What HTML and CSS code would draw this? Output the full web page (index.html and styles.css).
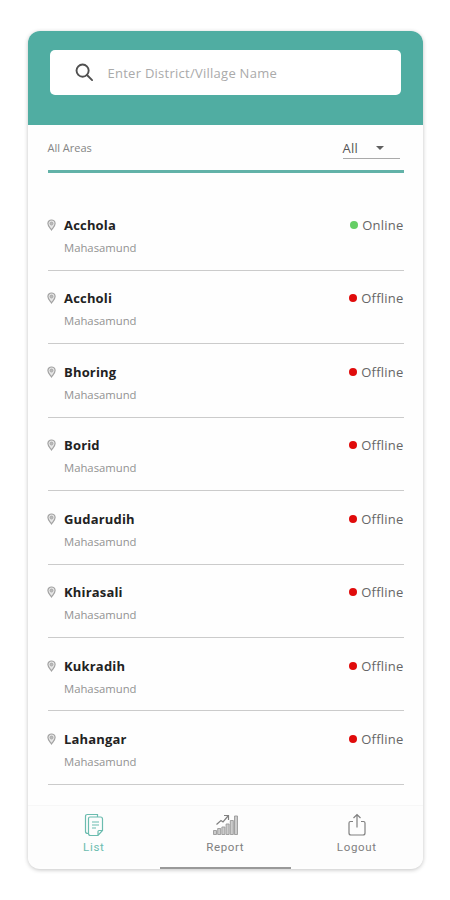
FILE: index.html
```html
<!DOCTYPE html>
<html lang="en">
<head>
<meta charset="utf-8">
<title>All Areas</title>
<link rel="stylesheet" href="styles.css">
</head>
<body>
<svg class="defs" width="0" height="0" aria-hidden="true">
  <symbol id="pin" viewBox="0 0 10 13"><path d="M5 12C3.500 9.600 1 7.700 1 4.900a4 4 0 0 1 8 0C9 7.700 6.500 9.600 5 12z" fill="#e6e6e6" stroke="#a2a2a2" stroke-width="1.300"/><circle cx="5" cy="4.900" r="1.600" fill="#bbb" stroke="#a2a2a2" stroke-width=".9"/></symbol>
</svg>
<main class="card">
  <header class="header">
    <div class="search">
      <svg class="search-icon" viewBox="0 0 20 20"><circle cx="8" cy="8" r="6.400"/><path d="M12.600 12.600l5.400 5.400"/></svg>
      <span class="placeholder">Enter District/Village Name</span>
    </div>
  </header>
  <section class="filter">
    <span class="filter-title">All Areas</span>
    <div class="select"><span>All</span><i class="caret"></i></div>
  </section>
  <ul class="list">
    <li class="row"><svg class="pin"><use href="#pin"/></svg><div class="place"><b class="name">Acchola</b><span class="district">Mahasamund</span></div><span class="status online">Online</span></li>
    <li class="row"><svg class="pin"><use href="#pin"/></svg><div class="place"><b class="name">Accholi</b><span class="district">Mahasamund</span></div><span class="status">Offline</span></li>
    <li class="row"><svg class="pin"><use href="#pin"/></svg><div class="place"><b class="name">Bhoring</b><span class="district">Mahasamund</span></div><span class="status">Offline</span></li>
    <li class="row"><svg class="pin"><use href="#pin"/></svg><div class="place"><b class="name">Borid</b><span class="district">Mahasamund</span></div><span class="status">Offline</span></li>
    <li class="row"><svg class="pin"><use href="#pin"/></svg><div class="place"><b class="name">Gudarudih</b><span class="district">Mahasamund</span></div><span class="status">Offline</span></li>
    <li class="row"><svg class="pin"><use href="#pin"/></svg><div class="place"><b class="name">Khirasali</b><span class="district">Mahasamund</span></div><span class="status">Offline</span></li>
    <li class="row"><svg class="pin"><use href="#pin"/></svg><div class="place"><b class="name">Kukradih</b><span class="district">Mahasamund</span></div><span class="status">Offline</span></li>
    <li class="row"><svg class="pin"><use href="#pin"/></svg><div class="place"><b class="name">Lahangar</b><span class="district">Mahasamund</span></div><span class="status">Offline</span></li>
  </ul>
  <nav class="nav">
    <div class="tab active">
      <svg class="icon" viewBox="0 0 26 24"><path d="M16.500 3.500V1.500H6.500Q4.500 1.500 4.500 3.500V18.500Q4.500 20.500 7 20.500M7.500 5.500Q7.500 4 9 4H19.500Q21.500 4 21.500 6V17.500L17 22.500H9.500Q7.500 22.500 7.500 20.500ZM17 22V18.500Q17 17.500 18 17.500H21M11 9h7M11 12h7M11 15h4"/></svg>
      <span>List</span>
    </div>
    <div class="tab">
      <svg class="icon" viewBox="0 0 26 24"><path class="bars" d="M1.500 17.500h3v4h-3zM5.700 15.500h3v6h-3zM9.900 14h3v7.500h-3zM14.100 11h3v10.500h-3zM18.300 7.500h3v14h-3zM22.500 3h3v18.500h-3z"/><path d="M4.500 11.500L9 7.500l2 1.500L16 3M12 2.500h4.500V7"/></svg>
      <span>Report</span>
    </div>
    <div class="tab">
      <svg class="icon" viewBox="0 0 26 24"><path d="M9 8.500H6.500Q5 8.500 5 10V20Q5 22 7 22H19Q21 22 21 20V10Q21 8.500 19.500 8.500H17M13 14.500V2M9.500 5L13 1.500L16.500 5"/></svg>
      <span>Logout</span>
    </div>
  </nav>
  <div class="home-bar"></div>
</main>
</body>
</html>
```
FILE: styles.css
```css
* { box-sizing: border-box; }
body { margin: 0; padding: 31px 28px; background: #fff; font-family: "Open Sans", sans-serif; }
.defs { position: absolute; }
.card { display: flex; flex-direction: column; width: 394.5px; height: 838px; overflow: hidden; border-radius: 12px; background: #fefefe; box-shadow: 0 1px 4px rgba(0,0,0,.24); }
.header { flex: none; height: 93.500px; padding: 19px 21.500px; background: #50ada2; }
.search { display: flex; align-items: center; height: 45px; padding-left: 25px; border-radius: 5px; background: #fff; }
.search-icon { width: 19px; height: 19px; fill: none; stroke: #505050; stroke-width: 2; stroke-linecap: round; }
.placeholder { margin-left: 14px; font-size: 13px; letter-spacing: .26px; color: #aaa; }
.filter { flex: none; display: flex; justify-content: space-between; height: 48.500px; margin: 0 19px 0 19.500px; border-bottom: 3px solid #62b2a8; }
.filter-title { margin-top: 15px; font-size: 11px; line-height: 16px; color: #858585; }
.select { display: flex; align-items: center; gap: 18px; width: 57px; height: 22px; margin: 12.500px 4px 0 0; border-bottom: 1px solid #aaa; font-size: 13px; letter-spacing: .2px; color: #555; }
.caret { border: 4.500px solid transparent; border-top-color: #606060; border-bottom: 0; }
.list { flex: none; margin: 24.500px 19px 0 19.500px; padding: 0; list-style: none; }
.row { display: flex; height: 73.430px; padding-top: 17.500px; border-bottom: 1.500px solid #cbcbcb; }
.pin { width: 9px; height: 12px; margin: 4px 0 0 -.5px; }
.place { flex: 1; margin-left: 8px; }
.name, .district { display: block; }
.name { font-size: 13px; line-height: 20px; letter-spacing: .18px; color: #222; }
.district { margin-top: 4px; font-size: 11.300px; line-height: 18px; color: #929292; }
.status { display: flex; align-items: center; gap: 4px; height: 20px; font-size: 13px; letter-spacing: .22px; color: #666; }
.status::before { content: ""; width: 8px; height: 8px; border-radius: 50%; background: #e00b0b; }
.online::before { background: #65ce65; }
.nav { flex: none; display: grid; grid-template-columns: repeat(3, 131.500px); height: 62px; margin-top: auto; padding-top: 7px; border-top: 1px solid #f7f7f7; background: #fdfdfd; }
.tab { display: flex; flex-direction: column; align-items: center; font-family: Roboto, sans-serif; font-size: 11.500px; line-height: 16px; letter-spacing: .65px; color: #808080; }
.active { color: #6bbcaf; }
.icon { width: 26px; height: 24px; margin-bottom: 2px; fill: none; stroke: currentColor; stroke-width: 1.200; }
.bars { fill: #ccc; stroke: #999; stroke-width: .9; }
.home-bar { flex: none; width: 131px; height: 2.500px; margin-left: 132px; background: #999; }
```
